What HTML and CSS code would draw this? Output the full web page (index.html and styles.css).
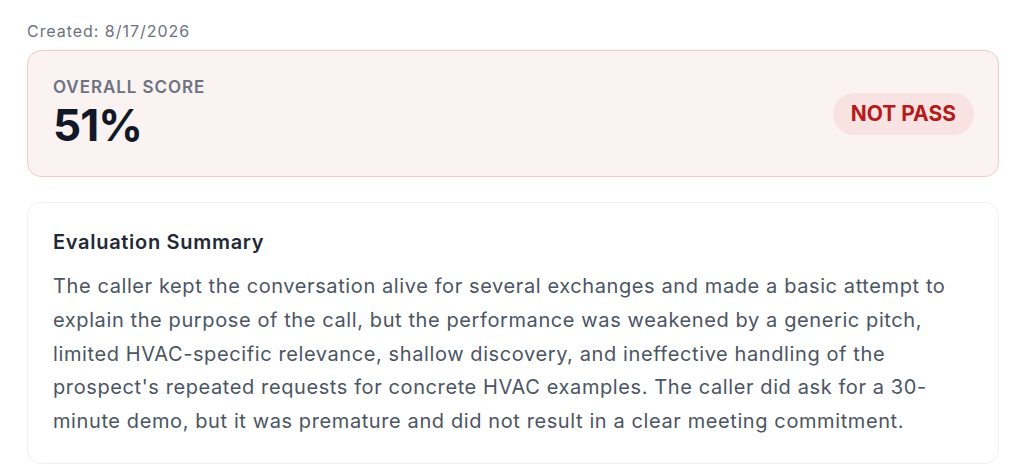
FILE: index.html
```html
<!DOCTYPE html>
<html>
<head>
<meta charset="utf-8">
<link rel="stylesheet" href="styles.css">
</head>
<body>
<main class="page">
  <div class="created">Created: 8/17/2026</div>
  <section class="score-card">
    <div class="score-info">
      <div class="score-label">OVERALL SCORE</div>
      <div class="score-value">51%</div>
    </div>
    <span class="badge">NOT PASS</span>
  </section>
  <section class="summary-card">
    <h2 class="summary-title">Evaluation Summary</h2>
    <p class="summary-text">The caller kept the conversation alive for several exchanges and made a basic attempt to explain the purpose of the call, but the performance was weakened by a generic pitch, limited HVAC-specific relevance, shallow discovery, and ineffective handling of the prospect's repeated requests for concrete HVAC examples. The caller did ask for a 30-minute demo, but it was premature and did not result in a clear meeting commitment.</p>
  </section>
</main>
</body>
</html>
```
FILE: styles.css
```css
* { box-sizing: border-box; }
html, body { margin: 0; padding: 0; background: #ffffff; }
body {
  font-family: Inter, "Noto Sans", sans-serif;
  color: #111827;
}
.page {
  padding: 21px 27px 0 27px;
  display: flex;
  flex-direction: column;
}
.created {
  font-size: 16px;
  line-height: 20px;
  letter-spacing: 0.06em;
  color: #6b7280;
  margin-bottom: 9px;
}
.score-card {
  display: flex;
  align-items: center;
  justify-content: space-between;
  background: #fbf2f2;
  border: 1px solid #f5c9c7;
  border-radius: 14px;
  padding: 0 24px 0 25px;
  height: 127px;
}
.score-info {
  align-self: flex-start;
  padding-top: 24px;
}
.score-label {
  font-size: 17px;
  line-height: 24px;
  font-weight: 600;
  letter-spacing: 0.055em;
  color: #6b7280;
}
.score-value {
  margin-top: 4px;
  font-size: 44px;
  line-height: 44px;
  font-weight: 700;
  color: #111827;
  letter-spacing: -0.02em;
}
.badge {
  display: inline-flex;
  align-items: center;
  height: 42px;
  padding: 0 18px;
  border-radius: 999px;
  background: #f8e2e2;
  color: #b41c1c;
  font-size: 21px;
  font-weight: 700;
}
.summary-card {
  margin-top: 25px;
  border: 1px solid #eef0f2;
  border-radius: 14px;
  padding: 25px 24px 24px 25px;
}
.summary-title {
  margin: 0 0 14px 0;
  font-size: 20px;
  line-height: 28px;
  font-weight: 600;
  letter-spacing: 0.035em;
  color: #1f2937;
}
.summary-text {
  margin: 0;
  font-size: 20px;
  line-height: 33.75px;
  letter-spacing: 0.03em;
  color: #4b5563;
}
```
